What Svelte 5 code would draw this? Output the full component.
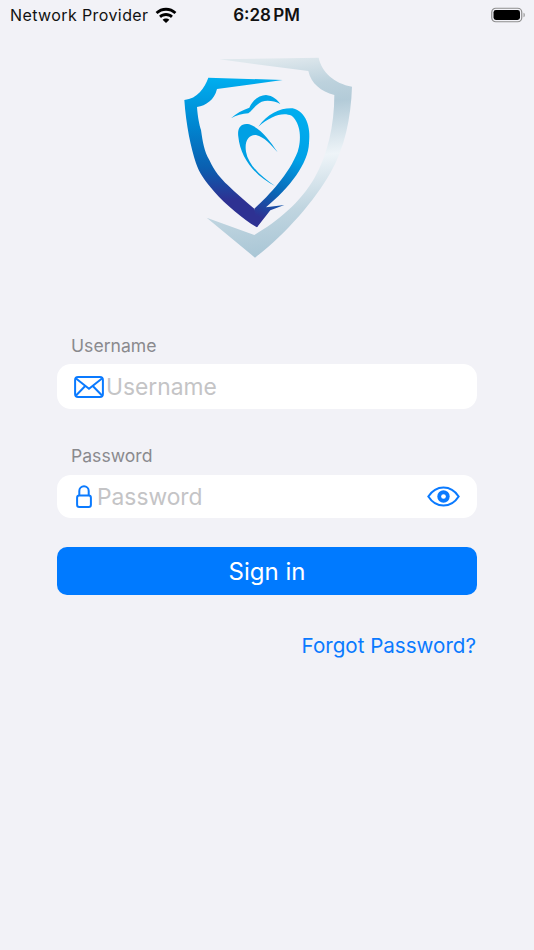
<script>
  let showPassword = $state(false);
</script>

<div class="page">
  <header class="status">
    <div class="carrier">
      <span>Network Provider</span>
      <svg class="wifi" viewBox="0 0 22 16" aria-hidden="true">
        <path d="M11 .8c3.900 0 7.500 1.500 10.400 4.200l-1.900 2.100C17.200 4.900 14.200 3.700 11 3.700S4.800 4.900 2.500 7.100L.6 5C3.500 2.300 7.100.8 11 .8z" />
        <path d="M11 6.100c2.600 0 5 1 6.900 2.700l-1.900 2.100c-1.400-1.200-3.100-1.900-5-1.900s-3.600.7-5 1.900L4.100 8.800C6 7.100 8.400 6.100 11 6.100z" />
        <path d="M11 11.400c1.300 0 2.500.5 3.400 1.300L11 16l-3.400-3.300c.9-.8 2.100-1.300 3.400-1.300z" />
      </svg>
    </div>
    <div class="time">6:28 PM</div>
    <svg class="battery" viewBox="0 0 34 16" aria-hidden="true">
      <rect x=".75" y="1.250" width="30" height="13.500" rx="4" fill="none" stroke="#8e8e8e" stroke-width="1.200" />
      <rect x="2.500" y="3" width="26.500" height="10" rx="2.400" fill="#000" />
      <path d="M32.500 5.800c.9.300 1.300 1.100 1.300 2.200s-.4 1.900-1.300 2.200z" fill="#9a9a9a" />
    </svg>
  </header>

  <div class="logo-wrap">
    <svg class="logo" viewBox="0 0 585 675" role="img" aria-label="Shield logo">
      <defs>
        <linearGradient id="blue" gradientUnits="userSpaceOnUse" x1="0" y1="100" x2="0" y2="547">
          <stop offset="0" stop-color="#00aeef" />
          <stop offset=".3" stop-color="#0088d2" />
          <stop offset=".6" stop-color="#0a5fb0" />
          <stop offset=".82" stop-color="#2e3192" />
        </linearGradient>
        <linearGradient id="heart" gradientUnits="userSpaceOnUse" x1="380" y1="200" x2="250" y2="510">
          <stop offset="0" stop-color="#00aeef" />
          <stop offset=".4" stop-color="#00a0e6" />
          <stop offset=".75" stop-color="#0a64b4" />
          <stop offset="1" stop-color="#2e3192" />
        </linearGradient>
        <linearGradient id="silver" gradientUnits="userSpaceOnUse" x1="330" y1="40" x2="400" y2="640">
          <stop offset="0" stop-color="#dfe8ed" />
          <stop offset=".14" stop-color="#bdd2dd" />
          <stop offset=".24" stop-color="#b3cbd8" />
          <stop offset=".5" stop-color="#eef4f8" />
          <stop offset=".75" stop-color="#c0d5e0" />
          <stop offset="1" stop-color="#a6c4d4" />
        </linearGradient>
      </defs>
      <path fill="url(#silver)" d="M145 43L443 38C452 82 490 115 543 125C540 220 520 310 480 380C430 470 340 570 252 638L107 518L250 570C320 530 390 470 430 400C470 330 490 240 490 150C450 140 420 115 412 78Z" />
      <path fill="url(#blue)" d="M112 98L335 105L138 132C130 165 105 182 78 186C80 215 85 240 90 255C95 290 100 320 115 345C130 378 150 402 170 420C195 445 225 470 250 491L265 530L258 547C220 525 165 480 130 440C100 405 85 385 75 355C60 310 45 240 40 165C80 160 100 130 112 98Z" />
      <path fill="url(#heart)" d="M262 245C290 205 330 188 365 190C405 200 420 245 414 295C412 355 355 430 285 487L340 480L298 496L258 547L250 491C295 450 355 385 380 320C392 285 390 235 362 212C335 200 300 212 262 245Z" />
      <path fill="#00a0e4" d="M320 322C295 285 270 250 235 238C210 232 198 250 202 275C208 340 255 395 312 423C270 395 232 360 225 320C220 290 232 268 255 270C280 275 300 300 320 322Z" />
      <path fill="#00a6e8" d="M180 220C195 205 215 195 235 188C245 165 265 150 285 150C305 152 320 165 328 177C310 168 290 165 272 170C255 178 245 195 232 205C215 205 195 212 180 220Z" />
    </svg>
  </div>

  <form class="form" onsubmit={(e) => e.preventDefault()}>
    <label class="field">
      <span class="label">Username</span>
      <span class="box tall">
        <svg class="mail" viewBox="0 0 30 22" aria-hidden="true">
          <rect x="1.100" y="1.100" width="27.800" height="19.800" rx="3" />
          <path d="M2 2.500l13 10.300L28 2.500M2 19.500l9.200-9.500M28 19.500L18.800 10" />
        </svg>
        <input class="user" type="text" placeholder="Username" />
      </span>
    </label>

    <label class="field second">
      <span class="label lower">Password</span>
      <span class="box">
        <svg class="lock" viewBox="0 0 16 23" aria-hidden="true">
          <rect x="1.100" y="10.500" width="13.800" height="11.400" rx="2.200" />
          <path d="M3.300 10.500V6a4.700 4.700 0 0 1 9.400 0v4.500" />
        </svg>
        <input class="pass" type={showPassword ? 'text' : 'password'} placeholder="Password" />
        <button class="eye" type="button" aria-label="Show password" onclick={() => (showPassword = !showPassword)}>
          <svg viewBox="0 0 32 20" aria-hidden="true">
            <path class="outline" d="M1.300 10C5 4.200 10 1.200 16 1.200S27 4.200 30.700 10C27 15.800 22 18.800 16 18.800S5 15.800 1.300 10z" />
            <circle class="ring" cx="16" cy="10" r="6" />
            <circle class="dot" cx="16" cy="10" r="2.300" />
          </svg>
        </button>
      </span>
    </label>

    <button class="signin" type="submit">Sign in</button>
    <a class="forgot" href="#forgot">Forgot Password?</a>
  </form>
</div>

<style>
  :global(body) {
    margin: 0;
    background: #f2f2f7;
  }
  .page {
    width: 534px;
    height: 950px;
    overflow: hidden;
    background: #f2f2f7;
    font-family: Inter, "Liberation Sans", sans-serif;
  }
  .status {
    height: 30px;
    display: grid;
    grid-template-columns: 1fr auto 1fr;
    align-items: center;
    padding: 0 9px 0 10px;
    color: #111;
  }
  .carrier {
    display: flex;
    align-items: center;
    gap: 7px;
    font-size: 16px;
    letter-spacing: .4px;
  }
  .wifi {
    width: 22px;
    height: 16px;
    fill: #000;
    margin-top: -1px;
  }
  .time {
    font-size: 17px;
    font-weight: 600;
    word-spacing: -2px;
    margin-right: 2px;
  }
  .battery {
    width: 34px;
    height: 16px;
    justify-self: end;
  }
  .logo-wrap {
    display: flex;
    justify-content: center;
    padding: 15px 0 0 3px;
    height: 225px;
  }
  .logo {
    width: 195px;
    height: 225px;
  }
  .form {
    margin: 65px 57px 0;
    display: flex;
    flex-direction: column;
  }
  .field {
    display: flex;
    flex-direction: column;
  }
  .second {
    margin-top: 36px;
  }
  .label {
    padding-left: 14px;
    font-size: 17.600px;
    line-height: 22px;
    color: #8a8a8e;
    margin-bottom: 7px;
  }
  .lower {
    margin-bottom: 8px;
  }
  .box {
    height: 43px;
    background: #fff;
    border-radius: 14px;
    display: flex;
    align-items: center;
    padding-left: 17px;
    padding-right: 17px;
  }
  .tall {
    height: 45px;
  }
  .mail {
    width: 30px;
    height: 22px;
    flex: none;
    fill: none;
    stroke: #0a7aff;
    stroke-width: 2;
  }
  .lock {
    width: 16px;
    height: 23px;
    flex: none;
    margin-left: 2px;
    fill: none;
    stroke: #0a7aff;
    stroke-width: 2;
  }
  input {
    flex: 1;
    min-width: 0;
    border: 0;
    outline: 0;
    padding: 0;
    background: transparent;
    font: inherit;
    font-size: 22.800px;
    color: #111;
  }
  input::placeholder {
    color: #c4c4c6;
    opacity: 1;
  }
  .user {
    margin-left: 2px;
  }
  .pass {
    margin-left: 5px;
  }
  .eye {
    width: 33px;
    height: 21px;
    padding: 0;
    border: 0;
    background: none;
    flex: none;
  }
  .eye svg {
    display: block;
    width: 33px;
    height: 21px;
  }
  .outline {
    fill: none;
    stroke: #0a7aff;
    stroke-width: 2;
  }
  .ring {
    fill: #0a7aff;
  }
  .dot {
    fill: #fff;
  }
  .signin {
    margin-top: 29px;
    height: 48px;
    border: 0;
    border-radius: 10px;
    background: #007aff;
    color: #fff;
    font: inherit;
    font-size: 24px;
  }
  .forgot {
    align-self: flex-end;
    margin-top: 37px;
    margin-right: 1px;
    font-size: 20.600px;
    line-height: 27px;
    color: #0a7aff;
    text-decoration: none;
  }
</style>
